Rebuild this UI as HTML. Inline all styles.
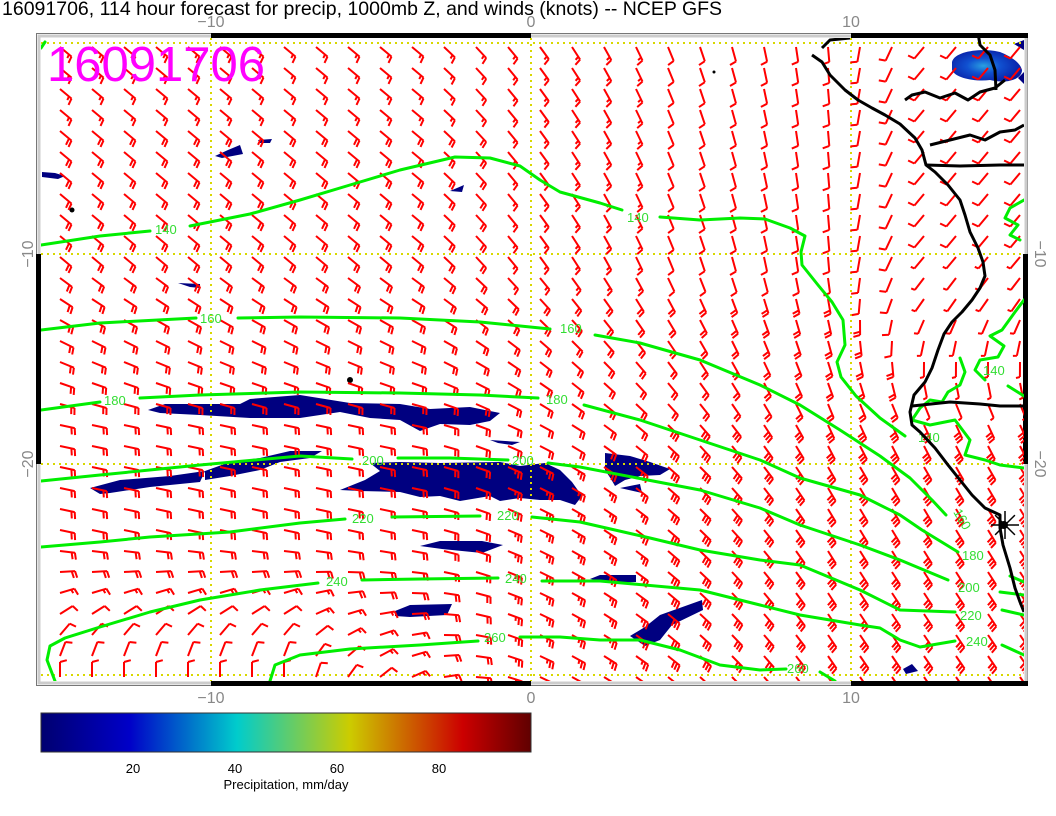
<!DOCTYPE html>
<html><head><meta charset="utf-8">
<style>
html,body{margin:0;padding:0;background:#fff;}
body{width:1056px;height:816px;overflow:hidden;position:relative;font-family:"Liberation Sans",sans-serif;}
svg{position:absolute;left:0;top:0;}
</style></head>
<body>
<svg id="s" width="1056" height="816" viewBox="0 0 1056 816" xmlns="http://www.w3.org/2000/svg">
<defs>
<clipPath id="c"><rect x="41" y="38" width="983" height="643"/></clipPath>
<linearGradient id="cb" x1="0" x2="1" y1="0" y2="0">
<stop offset="0" stop-color="#000070"/>
<stop offset="0.18" stop-color="#0000c8"/>
<stop offset="0.40" stop-color="#00cccc"/>
<stop offset="0.63" stop-color="#cccc00"/>
<stop offset="0.86" stop-color="#cc0000"/>
<stop offset="1" stop-color="#600000"/>
</linearGradient>
<radialGradient id="bb" cx="0.45" cy="0.5" r="0.6">
<stop offset="0" stop-color="#2aa0e0"/>
<stop offset="0.4" stop-color="#1050d0"/>
<stop offset="1" stop-color="#0818a0"/>
</radialGradient>
</defs>
<text x="2" y="15" font-size="19.5" fill="#000">16091706, 114 hour forecast for precip, 1000mb Z, and winds (knots) -- NCEP GFS</text>
<g fill="#888" font-size="16" text-anchor="middle">
<text x="211" y="27">−10</text><text x="531" y="27">0</text><text x="851" y="27">10</text>
<text x="211" y="703">−10</text><text x="531" y="703">0</text><text x="851" y="703">10</text>
<text transform="translate(33,254) rotate(-90)">−10</text>
<text transform="translate(33,464) rotate(-90)">−20</text>
<text transform="translate(1035,254) rotate(90)">−10</text>
<text transform="translate(1035,464) rotate(90)">−20</text>
</g>
<rect x="36.5" y="33.5" width="991" height="652" fill="none" stroke="#777" stroke-width="1"/>
<rect x="39" y="36" width="987" height="647" fill="none" stroke="#ccc" stroke-width="3"/>
<g fill="#000">
<rect x="211" y="33" width="320" height="5"/><rect x="851" y="33" width="177" height="5"/>
<rect x="211" y="681" width="320" height="5"/><rect x="851" y="681" width="177" height="5"/>
<rect x="36" y="254" width="5" height="210"/><rect x="1023" y="254" width="5" height="210"/>
</g>
<g id="plot" clip-path="url(#c)"></g>
<rect x="41" y="713" width="490" height="39" fill="url(#cb)" stroke="#333" stroke-width="1"/>
<g font-size="13" fill="#000" text-anchor="middle">
<text x="133" y="773">20</text><text x="235" y="773">40</text><text x="337" y="773">60</text><text x="439" y="773">80</text>
<text x="286" y="789">Precipitation, mm/day</text>
</g>
</svg>
<script>
(function(){
var NS="http://www.w3.org/2000/svg";
var g=document.getElementById('plot');
function el(t,a,p){var e=document.createElementNS(NS,t);for(var k in a)e.setAttribute(k,a[k]);(p||g).appendChild(e);return e;}
function cl(v,a,b){return Math.max(a,Math.min(b,v));}
var navy="#000080";
var polys=[
"148,410 165,404 240,404 250,399 300,395 350,403 400,404 430,409 470,407 500,413 490,421 470,425 440,424 420,431 400,420 370,418 340,412 300,418 250,418 200,415 160,413",
"90,488 120,480 170,476 205,471 200,482 150,487 110,493 100,494",
"205,471 230,462 260,458 290,451 322,451 310,458 280,462 260,470 230,476 205,480",
"340,490 365,480 380,471 370,463 400,462 440,463 500,462 520,466 545,463 560,470 572,482 582,496 575,505 560,500 540,500 520,498 500,501 490,496 460,501 440,496 420,497 400,492 360,491",
"420,546 440,541 482,541 503,545 482,553 442,549",
"395,611 410,605 452,604 447,615 410,617 395,616",
"590,579 600,575 636,575 636,582 612,583",
"605,453 630,456 650,462 670,469 660,475 640,476 625,480 615,486 611,479 605,470",
"630,636 645,627 660,615 702,600 703,610 672,625 660,640 645,646",
"215,156 228,150 240,145 243,154 222,158",
"258,140 272,139 270,143 260,143",
"450,191 464,185 462,192",
"178,283 200,284 200,288 190,287",
"42,172 55,173 65,176 58,179 42,177",
"903,669 912,664 918,671 906,674",
"490,440 520,442 512,445 498,443",
"620,488 640,484 642,493",
"1014,44 1024,40 1024,50",
"1018,78 1024,72 1024,84"];
polys.forEach(function(p){el('polygon',{points:p,fill:navy});});
el('path',{d:"M952,62 C955,50 985,48 1000,52 C1010,56 1020,62 1022,70 C1022,80 1005,84 990,80 C975,82 955,78 952,70 Z",fill:"url(#bb)"});
el('circle',{cx:350,cy:380,r:3,fill:"#000"});
el('circle',{cx:72,cy:210,r:2.5,fill:"#000"});
el('circle',{cx:714,cy:72,r:1.5,fill:"#000"});
var gy={stroke:"#d8d800","stroke-width":2,"stroke-dasharray":"2 4",fill:"none"};
[211,531,851].forEach(function(x){var a=Object.assign({x1:x,x2:x,y1:38,y2:681},gy);el('line',a);});
[43,254,464,675].forEach(function(y){var a=Object.assign({x1:41,x2:1024,y1:y,y2:y},gy);el('line',a);});
function field(lon,lat){
  var L=-lat;
  var aW = L<=10?40:(L<=18?40-(L-10)*3.5:12);
  var aE = L<=10?85:(L<=20?85-(L-10)*2.5:60-(L-20)*0.5);
  var r=cl((lon+4)/13,0,1);
  var a=aW+(aE-aW)*r;
  var sp=20;
  if(L<4) sp=15;
  if(lon>-2 && L<12) sp=15;
  if(lon>3 && L<12) sp=10;
  if(lon>-2 && L>19) sp=25;
  if(lon>3 && L>17) sp=30;
  var rot=Math.pow(cl((L-23)/7,0,1)*cl((0-lon)/8,0,1),1.5);
  if(rot>0){a=a-rot*(a+90); if(rot>0.2) sp=15; if(rot>0.4) sp=10;}
  var tr=cl((lon-9)/3,0,1)*cl((17-L)/5,0,1);
  if(tr>0){a=a+tr*45; if(tr>0.3) sp=10;}
  if(lon>=12 && L>=10 && L<=17){sp=5;}
  return [a,sp];
}
var bg=el('g',{stroke:"#ff0000","stroke-width":2,fill:"none","stroke-linecap":"butt"});
for(var lat=0;lat>=-30;lat--){
  for(var lon=-15;lon<=15;lon++){
    var x=531+32*lon, y=44+21*(-lat);
    var sx=x+9, sy=y+3;
    var f=field(lon,lat), a=f[0]*Math.PI/180, sp=f[1];
    var dx=Math.cos(a), dy=Math.sin(a);
    var tx=sx+15*dx, ty=sy+15*dy;
    var d="M"+sx.toFixed(1)+","+sy.toFixed(1)+"L"+tx.toFixed(1)+","+ty.toFixed(1);
    var fa=a+75*Math.PI/180, fx=Math.cos(fa), fy=Math.sin(fa);
    var n=Math.floor(sp/10), h=(sp%10)>=5, i;
    for(i=0;i<n;i++){var px=tx-i*3.3*dx, py=ty-i*3.3*dy; d+="M"+px.toFixed(1)+","+py.toFixed(1)+"l"+(7*fx).toFixed(1)+","+(7*fy).toFixed(1);}
    if(h){var px=tx-i*3.3*dx, py=ty-i*3.3*dy; if(n==0){px=tx;py=ty;} d+="M"+px.toFixed(1)+","+py.toFixed(1)+"l"+(4*fx).toFixed(1)+","+(4*fy).toFixed(1);}
    el('path',{d:d},bg);
  }
}
var cg=el('g',{stroke:"#00ee00","stroke-width":3,fill:"none","stroke-linejoin":"round","stroke-linecap":"round"});
var lines=[
"41,245 100,236 150,231","190,226 250,214 300,200 350,185 400,170 455,157 490,158 520,166 540,180 560,192 600,203 622,210",
"660,217 700,220 740,218 765,219 790,228 805,236 801,252 802,265 818,285 832,302 843,320 845,345 837,362 841,377 856,396 880,418 905,436",
"41,330 100,323 196,318","238,318 300,317 400,318 480,322 550,329","595,335 640,343 700,360 760,385 800,405 840,430 880,456 910,478 932,500 946,515",
"41,410 100,402","140,398 200,395 300,392 400,393 480,395 538,398","584,405 640,420 700,440 760,460 800,478 860,495 900,515 922,530 958,552","1010,576 1024,582",
"41,481 100,475 200,465 300,456 352,459","398,458 450,458 508,460","548,463 580,467 700,490 760,508 800,525 860,545 900,560 948,580","1000,592 1024,595",
"41,547 100,542 150,537 230,532 300,523 345,519","392,517 480,516","532,517 580,522 650,538 700,550 760,560 800,565 860,590 900,610 955,612","1002,610 1024,615",
"55,681 47,660 50,646 65,638 100,627 150,612 200,600 260,590 318,583","362,580 420,579 498,578","542,581 600,581 700,590 760,605 800,615 860,625 880,628 900,640 920,647 955,641","1002,645 1024,655",
"270,681 275,665 300,655 350,649 420,645 478,641","520,637 560,637 600,640 640,640 680,650 720,665 760,670 786,669","820,672 835,681",
"1024,300 1015,312 1002,330 990,336 1004,346 998,357 980,360 975,370 985,380","1008,386 1024,396",
"1024,200 1010,208 1005,218 1018,225 1010,235 1020,240",
"960,358 965,372 960,385 948,392 942,402 930,400 920,408 912,420 930,425 955,420 970,440 965,455 985,460 1000,465 1024,468",
"41,48 45,42"];
lines.forEach(function(p){el('polyline',{points:p},cg);});
var lg=el('g',{fill:"#33dd33","font-size":13,"font-family":"Liberation Sans, sans-serif"});
[[155,234,"140"],[627,222,"140"],[200,323,"160"],[560,333,"160"],[104,405,"180"],[546,404,"180"],[362,465,"200"],[512,465,"200"],[352,523,"220"],[497,520,"220"],[326,586,"240"],[505,583,"240"],[484,642,"260"],[787,673,"260"],[918,442,"140"],[983,375,"140"],[958,592,"200"],[960,620,"220"],[966,646,"240"],[962,560,"180"]].forEach(function(t){var e=el('text',{x:t[0],y:t[1]},lg);e.textContent=t[2];});
var r1=el('text',{transform:"translate(953,512) rotate(60)",fill:"#33dd33","font-size":13});r1.textContent="160";
var kg=el('g',{stroke:"#000","stroke-width":3,fill:"none","stroke-linejoin":"round"});
[
"812,55 822,62 830,75 845,90 858,100 872,108 885,115 900,124 915,138 922,150 926,165 935,172 948,185 960,200 965,215 970,232 978,248 983,262 985,276 980,288 972,300 962,312 952,322 944,334 938,350 932,368 925,382 914,395 910,412 912,425 920,432 935,448 948,465 960,480 972,495 985,508 1000,515 1000,528 1003,545 1010,568 1015,588 1020,602 1024,612",
"926,165 960,166 1000,165 1024,165",
"905,100 912,95 925,92 940,98 955,93 968,100 980,92 995,88 1005,80",
"912,406 950,402 980,404 1000,406 1024,406",
"930,145 950,140 970,135 985,140 1000,132 1015,130 1024,125",
"978,33 980,45 990,55 995,70 996,90",
"822,48 830,40 850,38"
].forEach(function(p){el('polyline',{points:p},kg);});
var sg=el('g',{stroke:"#000","stroke-width":1.5});
[0,45,90,135].forEach(function(q){var an=q*Math.PI/180;el('line',{x1:1005-14*Math.cos(an),y1:525-14*Math.sin(an),x2:1005+14*Math.cos(an),y2:525+14*Math.sin(an)},sg);});
el('circle',{cx:1004,cy:525,r:4,fill:"#000"});
})();
</script>
<div style="position:absolute;left:47px;top:36px;font-size:49px;color:#ff00ff;font-family:'Liberation Sans',sans-serif;line-height:58px;">16091706</div>
</body></html>
